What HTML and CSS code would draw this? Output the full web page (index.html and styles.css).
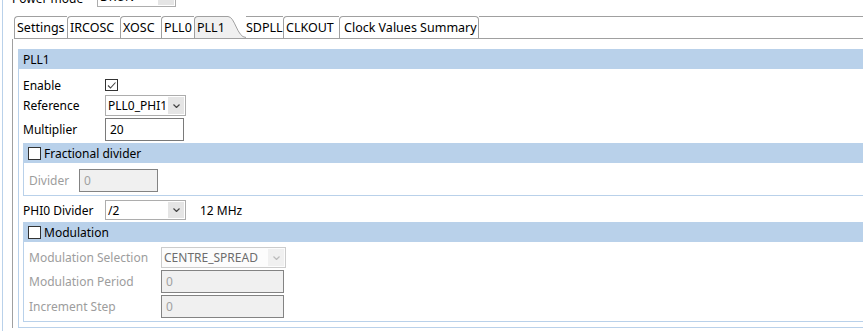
FILE: index.html
```html
<!DOCTYPE html>
<html>
<head>
    <title>PLL1</title>
    <link rel="stylesheet" href="styles.css">
</head>
<body>
<div class="shell">
    <div class="power-row">
        <span class="power-label">Power mode</span>
        <div class="combo power-combo">
            <span class="combo-text">DRUN</span>
            <span class="combo-btn"><svg width="7" height="4" viewBox="0 0 7 4"><path d="M0.5 0.5 L3.5 3.5 L6.5 0.5" fill="none" stroke="#444" stroke-width="1.2"/></svg></span>
        </div>
    </div>

    <div class="tabfolder">
        <div class="tabs">
            <div class="tab tab-settings">Settings</div>
            <div class="tab tab-ircosc">IRCOSC</div>
            <div class="tab tab-xosc">XOSC</div>
            <div class="tab tab-pll0">PLL0</div>
            <div class="tab tab-active">PLL1</div>
            <svg class="tab-curve" width="18" height="22" viewBox="0 0 18 22">
                <path d="M0 0.5 C7 0.5 9 21.5 18 21.5 L18 22 L0 22 Z" fill="#f0f0f0"/>
                <path d="M0 0.5 C7 0.5 9 21.5 18 21.5" fill="none" stroke="#a0a0a0"/>
            </svg>
            <div class="tab tab-after">SDPLL</div>
            <div class="tab tab-clkout">CLKOUT</div>
            <div class="tab tab-last">Clock Values Summary</div>
            <div class="tabs-fill"></div>
        </div>

        <div class="tab-body">
            <div class="panel">
                <div class="bar">PLL1</div>

                <div class="form">
                    <div class="row row-enable">
                        <span class="label">Enable</span>
                        <span class="check check-on"><svg width="11" height="11" viewBox="0 0 11 11"><path d="M2 5.5 L4.5 8 L9.5 2.5" fill="none" stroke="#444" stroke-width="1.1"/></svg></span>
                    </div>
                    <div class="row row-ref">
                        <span class="label">Reference</span>
                        <div class="combo combo-ref">
                            <span class="combo-text">PLL0_PHI1</span>
                            <span class="combo-btn"><svg width="7" height="4" viewBox="0 0 7 4"><path d="M0.5 0.5 L3.5 3.5 L6.5 0.5" fill="none" stroke="#444" stroke-width="1.2"/></svg></span>
                        </div>
                    </div>
                    <div class="row row-mult">
                        <span class="label">Multiplier</span>
                        <div class="field field-mult">20</div>
                    </div>

                    <div class="group group-frac">
                        <div class="bar bar-check"><span class="check"></span>Fractional divider</div>
                        <div class="group-body">
                            <div class="row row-divider">
                                <span class="label label-off label-divider">Divider</span>
                                <div class="field field-off field-divider">0</div>
                            </div>
                        </div>
                    </div>

                    <div class="row row-phi">
                        <span class="label">PHI0 Divider</span>
                        <div class="combo combo-phi">
                            <span class="combo-text">/2</span>
                            <span class="combo-btn"><svg width="7" height="4" viewBox="0 0 7 4"><path d="M0.5 0.5 L3.5 3.5 L6.5 0.5" fill="none" stroke="#444" stroke-width="1.2"/></svg></span>
                        </div>
                        <span class="freq">12 MHz</span>
                    </div>

                    <div class="group group-mod">
                        <div class="bar bar-check"><span class="check"></span>Modulation</div>
                        <div class="group-body">
                            <div class="row row-modsel">
                                <span class="label label-off label-mod">Modulation Selection</span>
                                <div class="combo combo-off combo-mod">
                                    <span class="combo-text">CENTRE_SPREAD</span>
                                    <span class="combo-btn"><svg width="7" height="4" viewBox="0 0 7 4"><path d="M0.5 0.5 L3.5 3.5 L6.5 0.5" fill="none" stroke="#bbb" stroke-width="1.2"/></svg></span>
                                </div>
                            </div>
                            <div class="row row-modper">
                                <span class="label label-off label-mod">Modulation Period</span>
                                <div class="field field-off field-mod">0</div>
                            </div>
                            <div class="row row-inc">
                                <span class="label label-off label-mod">Increment Step</span>
                                <div class="field field-off field-mod">0</div>
                            </div>
                        </div>
                    </div>
                </div>
            </div>
        </div>
    </div>
</div>
</body>
</html>
```

FILE: styles.css
```css
body {
    margin: 0;
    padding: 0;
    background-color: #fff;
    font-family: "Noto Sans", "Noto Sans CJK SC", sans-serif;
    font-size: 12px;
    color: #000;
    overflow: hidden;
}

.shell {
    height: 331px;
    margin-left: 2px;
    padding-left: 9px;
    border-left: 1px solid #b9d1ea;
    overflow: hidden;
}

/* power mode row, mostly scrolled off the top */
.power-row {
    display: flex;
    align-items: center;
    height: 21px;
    margin-top: -14px;
}

.power-label {
    width: 85px;
    padding-top: 4px;
}

.power-combo {
    width: 79px;
}

/* tabs */
.tabfolder {
    margin-top: 9px;
}

.tabs {
    display: flex;
    height: 22px;
    margin-left: 2px;
    border-bottom: 1px solid #a0a0a0;
}

.tab {
    display: flex;
    align-items: center;
    box-sizing: border-box;
    height: 22px;
    padding: 0 0 0 2px;
    border-top: 1px solid #a0a0a0;
    border-left: 1px solid #a0a0a0;
    border-top-left-radius: 4px;
    white-space: nowrap;
    font-size: 12.5px;
}

/* widths taken from the tab strip */
.tab-settings { width: 53px; }
.tab-ircosc { width: 53px; }
.tab-xosc { width: 41px; }
.tab-pll0 { width: 33px; }
.tab-clkout { width: 56px; }

.tab-active {
    width: 34px;
    background-color: #f0f0f0;
}

.tab-curve {
    flex: none;
    display: block;
}

.tab-after {
    width: 37px;
    border-left: none;
    border-top-left-radius: 0;
    padding-left: 0;
}

.tab-last {
    width: 140px;
    border-right: 1px solid #a0a0a0;
    border-top-right-radius: 4px;
    padding-left: 4px;
}

.tabs-fill {
    flex: 1;
    border-top: 1px solid #a0a0a0;
}

.tab-body {
    border-left: 1px solid #a0a0a0;
    padding: 10px 0 0 5px;
}

/* PLL1 panel */
.panel {
    border-left: 1px solid #b9d1ea;
    border-bottom: 1px solid #b9d1ea;
    padding-bottom: 5px;
}

.bar {
    display: flex;
    align-items: center;
    height: 20px;
    padding-left: 4px;
    background-color: #b9d1ea;
}

.form {
    padding-left: 4px;
}

.row {
    display: flex;
    align-items: center;
}

.label {
    width: 82px;
    flex: none;
}

.row-enable {
    height: 16px;
    margin-top: 8px;
}

.row-ref {
    margin-top: 2px;
}

.row-mult {
    margin-top: 2px;
}

.row-phi {
    margin-top: 4px;
}

.check {
    display: inline-flex;
    align-items: center;
    justify-content: center;
    box-sizing: border-box;
    width: 13px;
    height: 13px;
    border: 1px solid #333;
    background-color: #fff;
}

.check-on {
    height: 12px;
}

.bar-check .check {
    margin-right: 3px;
}

/* combo boxes */
.combo {
    display: flex;
    align-items: stretch;
    box-sizing: border-box;
    height: 21px;
    border: 1px solid #adadad;
    background-color: #fff;
}

.combo-text {
    flex: 1;
    display: flex;
    align-items: center;
    padding-left: 2px;
    white-space: nowrap;
}

.combo-btn {
    display: flex;
    align-items: center;
    justify-content: center;
    width: 16px;
    margin: 1px;
    background-color: #e5e5e5;
}

.combo-ref,
.combo-phi {
    width: 81px;
}

.combo-phi {
    height: 20px;
}

.freq {
    margin-left: 14px;
}

.combo-off {
    border-color: #cccccc;
    background-color: #fcfcfc;
    color: #6d6d6d;
}

.combo-off .combo-btn {
    background-color: #f0f0f0;
}

.combo-mod {
    width: 125px;
}

/* text fields */
.field {
    display: flex;
    align-items: center;
    box-sizing: border-box;
    height: 23px;
    padding-left: 4px;
    border: 1px solid #7a7a7a;
    background-color: #fff;
}

.field-mult {
    width: 79px;
}

.field-off {
    background-color: #f0f0f0;
    border-color: #838383;
    color: #a0a0a0;
}

.label-off {
    color: #9d9d9d;
}

/* check groups */
.group {
    border-left: 1px solid #b9d1ea;
    border-bottom: 1px solid #b9d1ea;
}

.group-frac {
    margin-top: 2px;
}

.group-mod {
    margin-top: 2px;
}

.group-body {
    padding: 0 0 3px 5px;
}

.row-divider {
    margin-top: 6px;
}

.label-divider {
    width: 50px;
}

.field-divider {
    width: 79px;
}

.row-modsel {
    margin-top: 5px;
}

.row-modper,
.row-inc {
    margin-top: 2px;
}

.label-mod {
    width: 132px;
}

.field-mod {
    width: 123px;
}
```
